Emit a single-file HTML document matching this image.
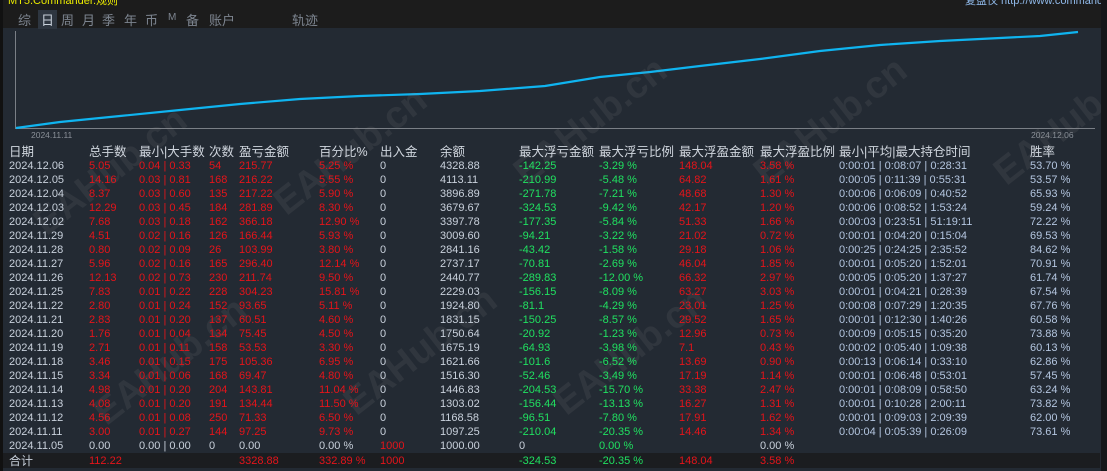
<!DOCTYPE html>
<html><head><meta charset="utf-8"><style>
*{margin:0;padding:0;box-sizing:border-box}
body{width:1107px;height:471px;overflow:hidden;background:#232a33;font-family:"Liberation Sans","Noto Sans CJK SC",sans-serif;font-size:11px;color:#c9d1dc;position:relative}
.top{position:absolute;left:0;top:0;width:1107px;height:28px;background:#1c1c1c}
.tabs span{position:absolute;top:10px;font-size:13px;color:#7d8590}
.r{position:absolute;left:0;width:1100px;height:14px;line-height:14px}
.r span{position:absolute;white-space:nowrap}
.a{left:9px}.b{left:89px}.c{left:139px}.d{left:209px}.e{left:239px}.f{left:319px}.g{left:380px}.h{left:440px}.i{left:519px}.j{left:599px}.k{left:679px}.l{left:760px}.m{left:839px}.n{left:1030px}
.R{color:#e5141a}.G{color:#20e060}.T{color:#b4c6e0}
.hd{font-size:12.5px;color:#d0d6de}
.wm{position:absolute;font-size:38px;font-weight:bold;color:rgba(150,150,150,0.12);transform:rotate(-38deg);white-space:nowrap}
</style></head><body>
<div class="top"></div>
<div style="position:absolute;left:8px;top:-8px;font-size:11px;color:#e8e800;white-space:nowrap">MT5.Commander.规则</div>
<div style="position:absolute;left:965px;top:-8px;font-size:11px;color:#8fb8e8;white-space:nowrap">复盘仪 http://www.commander.com</div>
<div class="tabs"><span style="left:18px">综</span><span style="left:38px;background:#2e3640;color:#c8d0da;padding:0 3px">日</span><span style="left:61px">周</span><span style="left:82px">月</span><span style="left:102px">季</span><span style="left:124px">年</span><span style="left:145px">币</span><span style="left:168px;font-size:10px;top:12px">M</span><span style="left:186px">备</span><span style="left:209px">账户</span><span style="left:292px">轨迹</span></div>
<div style="position:absolute;left:15px;top:31px;width:1px;height:98px;background:#7a7f86"></div>
<div style="position:absolute;left:15px;top:128px;width:1080px;height:1px;background:#7a7f86"></div>
<svg style="position:absolute;left:0;top:0" width="1107" height="140"><polyline fill="none" stroke="#0fb4f0" stroke-width="2.2" points="16,128 60,122 120,116 180,110 240,104 300,99 360,96 420,94 480,91 545,86 600,77 650,72 700,66 760,59 820,51 880,45 940,41 1000,38 1040,36 1078,32"/></svg>
<div style="position:absolute;left:31px;top:130px;font-size:8.5px;color:#8a9098">2024.11.11</div>
<div style="position:absolute;left:1031px;top:130px;font-size:8.5px;color:#8a9098">2024.12.06</div>
<div class="wm" style="left:20px;top:150px">EAHub.cn</div>
<div class="wm" style="left:260px;top:130px">EAHub.cn</div>
<div class="wm" style="left:500px;top:100px">EAHub.cn</div>
<div class="wm" style="left:740px;top:100px">EAHub.cn</div>
<div class="wm" style="left:980px;top:100px">EAHub.cn</div>
<div class="wm" style="left:80px;top:340px">EAHub.cn</div>
<div class="wm" style="left:330px;top:330px">EAHub.cn</div>
<div class="wm" style="left:540px;top:330px">EAHub.cn</div>
<div class="r hd" style="top:145px"><span class="a">日期</span><span class="b">总手数</span><span class="c">最小|大手数</span><span class="d">次数</span><span class="e">盈亏金额</span><span class="f">百分比%</span><span class="g">出入金</span><span class="h">余额</span><span class="i">最大浮亏金额</span><span class="j">最大浮亏比例</span><span class="k">最大浮盈金额</span><span class="l">最大浮盈比例</span><span class="m">最小|平均|最大持仓时间</span><span class="n">胜率</span></div>
<div class="r" style="top:159px"><span class="a">2024.12.06</span><span class="b R">5.05</span><span class="c R">0.04 | 0.33</span><span class="d R">54</span><span class="e R">215.77</span><span class="f R">5.25 %</span><span class="g">0</span><span class="h">4328.88</span><span class="i G">-142.25</span><span class="j G">-3.29 %</span><span class="k R">148.04</span><span class="l R">3.58 %</span><span class="m T">0:00:01 | 0:08:07 | 0:28:31</span><span class="n T">53.70 %</span></div>
<div class="r" style="top:173px"><span class="a">2024.12.05</span><span class="b R">14.16</span><span class="c R">0.03 | 0.81</span><span class="d R">168</span><span class="e R">216.22</span><span class="f R">5.55 %</span><span class="g">0</span><span class="h">4113.11</span><span class="i G">-210.99</span><span class="j G">-5.48 %</span><span class="k R">64.82</span><span class="l R">1.61 %</span><span class="m T">0:00:05 | 0:11:39 | 0:55:31</span><span class="n T">53.57 %</span></div>
<div class="r" style="top:187px"><span class="a">2024.12.04</span><span class="b R">8.37</span><span class="c R">0.03 | 0.60</span><span class="d R">135</span><span class="e R">217.22</span><span class="f R">5.90 %</span><span class="g">0</span><span class="h">3896.89</span><span class="i G">-271.78</span><span class="j G">-7.21 %</span><span class="k R">48.68</span><span class="l R">1.30 %</span><span class="m T">0:00:06 | 0:06:09 | 0:40:52</span><span class="n T">65.93 %</span></div>
<div class="r" style="top:201px"><span class="a">2024.12.03</span><span class="b R">12.29</span><span class="c R">0.03 | 0.45</span><span class="d R">184</span><span class="e R">281.89</span><span class="f R">8.30 %</span><span class="g">0</span><span class="h">3679.67</span><span class="i G">-324.53</span><span class="j G">-9.42 %</span><span class="k R">42.17</span><span class="l R">1.20 %</span><span class="m T">0:00:06 | 0:08:52 | 1:53:24</span><span class="n T">59.24 %</span></div>
<div class="r" style="top:215px"><span class="a">2024.12.02</span><span class="b R">7.68</span><span class="c R">0.03 | 0.18</span><span class="d R">162</span><span class="e R">366.18</span><span class="f R">12.90 %</span><span class="g">0</span><span class="h">3397.78</span><span class="i G">-177.35</span><span class="j G">-5.84 %</span><span class="k R">51.33</span><span class="l R">1.66 %</span><span class="m T">0:00:03 | 0:23:51 | 51:19:11</span><span class="n T">72.22 %</span></div>
<div class="r" style="top:229px"><span class="a">2024.11.29</span><span class="b R">4.51</span><span class="c R">0.02 | 0.16</span><span class="d R">126</span><span class="e R">166.44</span><span class="f R">5.93 %</span><span class="g">0</span><span class="h">3009.60</span><span class="i G">-94.21</span><span class="j G">-3.22 %</span><span class="k R">21.02</span><span class="l R">0.72 %</span><span class="m T">0:00:01 | 0:04:20 | 0:15:04</span><span class="n T">69.53 %</span></div>
<div class="r" style="top:243px"><span class="a">2024.11.28</span><span class="b R">0.80</span><span class="c R">0.02 | 0.09</span><span class="d R">26</span><span class="e R">103.99</span><span class="f R">3.80 %</span><span class="g">0</span><span class="h">2841.16</span><span class="i G">-43.42</span><span class="j G">-1.58 %</span><span class="k R">29.18</span><span class="l R">1.06 %</span><span class="m T">0:00:25 | 0:24:25 | 2:35:52</span><span class="n T">84.62 %</span></div>
<div class="r" style="top:257px"><span class="a">2024.11.27</span><span class="b R">5.96</span><span class="c R">0.02 | 0.16</span><span class="d R">165</span><span class="e R">296.40</span><span class="f R">12.14 %</span><span class="g">0</span><span class="h">2737.17</span><span class="i G">-70.81</span><span class="j G">-2.69 %</span><span class="k R">46.04</span><span class="l R">1.85 %</span><span class="m T">0:00:01 | 0:05:20 | 1:52:01</span><span class="n T">70.91 %</span></div>
<div class="r" style="top:271px"><span class="a">2024.11.26</span><span class="b R">12.13</span><span class="c R">0.02 | 0.73</span><span class="d R">230</span><span class="e R">211.74</span><span class="f R">9.50 %</span><span class="g">0</span><span class="h">2440.77</span><span class="i G">-289.83</span><span class="j G">-12.00 %</span><span class="k R">66.32</span><span class="l R">2.97 %</span><span class="m T">0:00:05 | 0:05:20 | 1:37:27</span><span class="n T">61.74 %</span></div>
<div class="r" style="top:285px"><span class="a">2024.11.25</span><span class="b R">7.83</span><span class="c R">0.01 | 0.22</span><span class="d R">228</span><span class="e R">304.23</span><span class="f R">15.81 %</span><span class="g">0</span><span class="h">2229.03</span><span class="i G">-156.15</span><span class="j G">-8.09 %</span><span class="k R">63.27</span><span class="l R">3.03 %</span><span class="m T">0:00:01 | 0:04:21 | 0:28:39</span><span class="n T">67.54 %</span></div>
<div class="r" style="top:299px"><span class="a">2024.11.22</span><span class="b R">2.80</span><span class="c R">0.01 | 0.24</span><span class="d R">152</span><span class="e R">93.65</span><span class="f R">5.11 %</span><span class="g">0</span><span class="h">1924.80</span><span class="i G">-81.1</span><span class="j G">-4.29 %</span><span class="k R">23.01</span><span class="l R">1.25 %</span><span class="m T">0:00:08 | 0:07:29 | 1:20:35</span><span class="n T">67.76 %</span></div>
<div class="r" style="top:313px"><span class="a">2024.11.21</span><span class="b R">2.83</span><span class="c R">0.01 | 0.20</span><span class="d R">137</span><span class="e R">60.51</span><span class="f R">4.60 %</span><span class="g">0</span><span class="h">1831.15</span><span class="i G">-150.25</span><span class="j G">-8.57 %</span><span class="k R">29.52</span><span class="l R">1.65 %</span><span class="m T">0:00:01 | 0:12:30 | 1:40:26</span><span class="n T">60.58 %</span></div>
<div class="r" style="top:327px"><span class="a">2024.11.20</span><span class="b R">1.76</span><span class="c R">0.01 | 0.04</span><span class="d R">134</span><span class="e R">75.45</span><span class="f R">4.50 %</span><span class="g">0</span><span class="h">1750.64</span><span class="i G">-20.92</span><span class="j G">-1.23 %</span><span class="k R">12.96</span><span class="l R">0.73 %</span><span class="m T">0:00:09 | 0:05:15 | 0:35:20</span><span class="n T">73.88 %</span></div>
<div class="r" style="top:341px"><span class="a">2024.11.19</span><span class="b R">2.71</span><span class="c R">0.01 | 0.11</span><span class="d R">158</span><span class="e R">53.53</span><span class="f R">3.30 %</span><span class="g">0</span><span class="h">1675.19</span><span class="i G">-64.93</span><span class="j G">-3.98 %</span><span class="k R">7.1</span><span class="l R">0.43 %</span><span class="m T">0:00:02 | 0:05:40 | 1:09:38</span><span class="n T">60.13 %</span></div>
<div class="r" style="top:355px"><span class="a">2024.11.18</span><span class="b R">3.46</span><span class="c R">0.01 | 0.15</span><span class="d R">175</span><span class="e R">105.36</span><span class="f R">6.95 %</span><span class="g">0</span><span class="h">1621.66</span><span class="i G">-101.6</span><span class="j G">-6.52 %</span><span class="k R">13.69</span><span class="l R">0.90 %</span><span class="m T">0:00:13 | 0:06:14 | 0:33:10</span><span class="n T">62.86 %</span></div>
<div class="r" style="top:369px"><span class="a">2024.11.15</span><span class="b R">3.34</span><span class="c R">0.01 | 0.06</span><span class="d R">168</span><span class="e R">69.47</span><span class="f R">4.80 %</span><span class="g">0</span><span class="h">1516.30</span><span class="i G">-52.46</span><span class="j G">-3.49 %</span><span class="k R">17.19</span><span class="l R">1.14 %</span><span class="m T">0:00:01 | 0:06:48 | 0:53:01</span><span class="n T">57.45 %</span></div>
<div class="r" style="top:383px"><span class="a">2024.11.14</span><span class="b R">4.98</span><span class="c R">0.01 | 0.20</span><span class="d R">204</span><span class="e R">143.81</span><span class="f R">11.04 %</span><span class="g">0</span><span class="h">1446.83</span><span class="i G">-204.53</span><span class="j G">-15.70 %</span><span class="k R">33.38</span><span class="l R">2.47 %</span><span class="m T">0:00:01 | 0:08:09 | 0:58:50</span><span class="n T">63.24 %</span></div>
<div class="r" style="top:397px"><span class="a">2024.11.13</span><span class="b R">4.08</span><span class="c R">0.01 | 0.20</span><span class="d R">191</span><span class="e R">134.44</span><span class="f R">11.50 %</span><span class="g">0</span><span class="h">1303.02</span><span class="i G">-156.44</span><span class="j G">-13.13 %</span><span class="k R">16.27</span><span class="l R">1.31 %</span><span class="m T">0:00:01 | 0:10:28 | 2:00:11</span><span class="n T">73.82 %</span></div>
<div class="r" style="top:411px"><span class="a">2024.11.12</span><span class="b R">4.56</span><span class="c R">0.01 | 0.08</span><span class="d R">250</span><span class="e R">71.33</span><span class="f R">6.50 %</span><span class="g">0</span><span class="h">1168.58</span><span class="i G">-96.51</span><span class="j G">-7.80 %</span><span class="k R">17.91</span><span class="l R">1.62 %</span><span class="m T">0:00:01 | 0:09:03 | 2:09:39</span><span class="n T">62.00 %</span></div>
<div class="r" style="top:425px"><span class="a">2024.11.11</span><span class="b R">3.00</span><span class="c R">0.01 | 0.27</span><span class="d R">144</span><span class="e R">97.25</span><span class="f R">9.73 %</span><span class="g">0</span><span class="h">1097.25</span><span class="i G">-210.04</span><span class="j G">-20.35 %</span><span class="k R">14.46</span><span class="l R">1.34 %</span><span class="m T">0:00:04 | 0:05:39 | 0:26:09</span><span class="n T">73.61 %</span></div>
<div class="r" style="top:439px"><span class="a">2024.11.05</span><span class="b">0.00</span><span class="c">0.00 | 0.00</span><span class="d">0</span><span class="e">0.00</span><span class="f">0.00 %</span><span class="g R">1000</span><span class="h">1000.00</span><span class="i">0</span><span class="j G">0.00 %</span><span class="l">0.00 %</span></div>
<div style="position:absolute;left:3px;top:453px;width:1097px;height:15px;background:#1b1d20"></div>
<div class="r" style="top:454px"><span class="a" style="font-size:12px">合计</span><span class="b R">112.22</span><span class="e R">3328.88</span><span class="f R">332.89 %</span><span class="g R">1000</span><span class="i G">-324.53</span><span class="j G">-20.35 %</span><span class="k R">148.04</span><span class="l R">3.58 %</span></div>
<div style="position:absolute;left:0;top:0;width:3px;height:471px;background:#111"></div>
<div style="position:absolute;left:1101px;top:0;width:6px;height:471px;background:#15171a"></div>
</body></html>
